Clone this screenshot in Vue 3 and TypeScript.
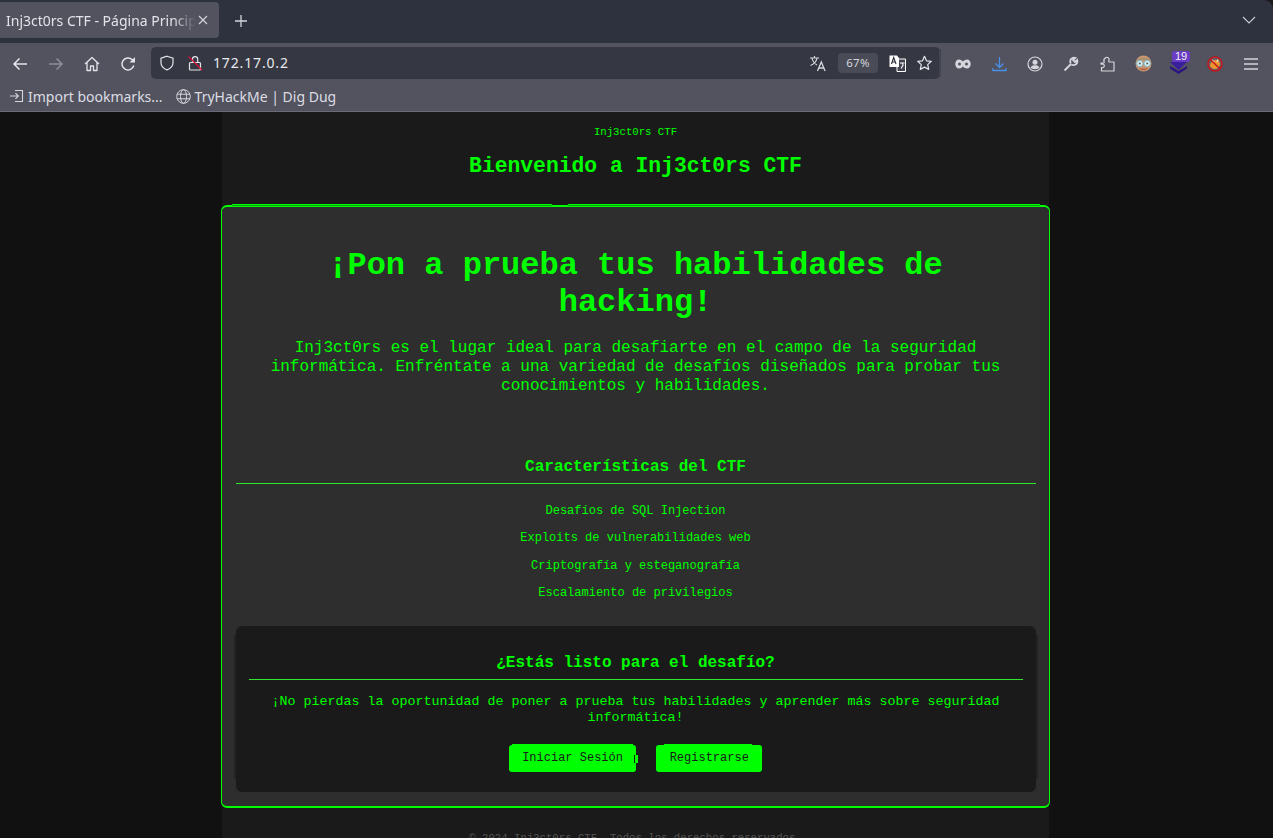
<script setup lang="ts">
const features: string[] = [
  'Desafíos de SQL Injection',
  'Exploits de vulnerabilidades web',
  'Criptografía y esteganografía',
  'Escalamiento de privilegios',
]
</script>

<template>
  <div class="window">
    <div class="tabstrip">
      <div class="tab">
        <span class="tab-title">Inj3ct0rs CTF - Página Principal</span>
        <svg class="tab-close" width="10" height="10" viewBox="0 0 10 10"><path d="M1 1l8 8M9 1l-8 8" stroke="#d5d6dc" stroke-width="1.1" fill="none" /></svg>
      </div>
      <svg class="new-tab" width="14" height="14" viewBox="0 0 14 14"><path d="M7 1v12M1 7h12" stroke="#d5d6dc" stroke-width="1.3" fill="none" /></svg>
      <svg class="tabs-menu" width="14" height="8" viewBox="0 0 14 8"><path d="M1 1l6 6 6-6" stroke="#c8c9d0" stroke-width="1.2" fill="none" /></svg>
    </div>

    <div class="toolbar">
      <button class="tool"><svg width="16" height="16" viewBox="0 0 16 16"><path d="M15 8H2M7.5 2.5L2 8l5.5 5.5" stroke="#e4e5ea" stroke-width="1.5" fill="none" /></svg></button>
      <button class="tool dim"><svg width="16" height="16" viewBox="0 0 16 16"><path d="M1 8h13M8.5 2.5L14 8l-5.5 5.5" stroke="#8d8e97" stroke-width="1.5" fill="none" /></svg></button>
      <button class="tool"><svg width="16" height="16" viewBox="0 0 16 16"><path d="M1 8l7-6.5L15 8M3 6.5V14.5h3.5V10h3v4.500H13V6.5" stroke="#e4e5ea" stroke-width="1.3" fill="none" stroke-linejoin="round" /></svg></button>
      <button class="tool"><svg width="16" height="16" viewBox="0 0 16 16"><path d="M13.8 9.5A6 6 0 1 1 12.3 3.800L14.500 6" stroke="#e4e5ea" stroke-width="1.4" fill="none" /><path d="M15 1v5.500H9.500z" fill="#e4e5ea" /></svg></button>

      <div class="urlbar">
        <svg class="ub-shield" width="16" height="16" viewBox="0 0 16 16"><path d="M8 1.200l6 2v4.500c0 3.500-2.500 5.800-6 7.200-3.500-1.400-6-3.700-6-7.200V3.200z" stroke="#e4e5ea" stroke-width="1.2" fill="none" /></svg>
        <svg class="ub-lock" width="15" height="16" viewBox="0 0 15 16"><rect x="1.500" y="7.500" width="11" height="7.500" rx="1" stroke="#e4e5ea" stroke-width="1.2" fill="none" /><path d="M4.500 7.500V4.200a2.600 2.600 0 0 1 5.200 0v3.300" stroke="#e4e5ea" stroke-width="1.2" fill="none" /><path d="M0.500 1.500l13.500 13.500" stroke="#e0103c" stroke-width="1.2" /></svg>
        <span class="url">172.17.0.2</span>
        <span class="ub-spacer"></span>
        <svg class="ub-translate" width="18" height="17" viewBox="0 0 18 17"><path d="M1 3h9M5.500 1v2M3 3c.6 3 2.800 5.800 5 7M8 3c-.5 3-3 6-6.500 7.500" stroke="#d5d6dc" stroke-width="1.2" fill="none" /><path d="M8.500 16l3.800-9 3.800 9M9.800 13h5" stroke="#d5d6dc" stroke-width="1.3" fill="none" /></svg>
        <span class="zoom-pill">67%</span>
        <svg class="ub-ext-translate" width="17" height="17" viewBox="0 0 17 17"><path d="M8 4h8.500v12.500H8z" fill="#41434e" stroke="#fff" stroke-width="1" /><path d="M0.500 0.500h7.500l2 2.500 0 9H0.500z" fill="#fff" /><path d="M2.500 9l2.200-6.500L7 9M3.300 7h2.800" stroke="#2b2d3a" stroke-width="1.1" fill="none" /><path d="M11 8h4.500M13.500 8v1.500M12 13.500l2.500-4" stroke="#fff" stroke-width="1.1" fill="none" /></svg>
        <svg class="ub-star" width="17" height="16" viewBox="0 0 16 16"><path d="M8 1.300l2 4.500 4.800.5-3.600 3.300 1 4.800L8 12.100l-4.200 2.300 1-4.800L1.200 6.300 6 5.800z" stroke="#e4e5ea" stroke-width="1.2" fill="none" stroke-linejoin="round" /></svg>
      </div>

      <div class="actions">
        <button class="act"><svg width="16" height="10" viewBox="0 0 16 10"><path d="M4 .5C5.800.5 7 1.500 8 2.500 9 1.500 10.200.5 12 .5c2.200 0 3.700 2 3.700 4.500S14.200 9.500 12 9.500c-1.800 0-3-1-4-2-1 1-2.200 2-4 2C1.800 9.500.3 7.500.3 5S1.800.5 4 .5z" fill="#d5d6dc" /><circle cx="4.500" cy="5" r="1.500" fill="#52535f" /><circle cx="11.500" cy="5" r="1.500" fill="#52535f" /></svg></button>
        <button class="act"><svg width="15" height="16" viewBox="0 0 15 16"><path d="M7.500 1v10M3.500 7.500l4 4 4-4" stroke="#4a90e8" stroke-width="1.3" fill="none" /><path d="M1 12v2.500h13V12" stroke="#4a90e8" stroke-width="1.3" fill="none" /></svg></button>
        <button class="act"><svg width="16" height="16" viewBox="0 0 16 16"><circle cx="8" cy="8" r="7" stroke="#d5d6dc" stroke-width="1.2" fill="none" /><circle cx="8" cy="6.300" r="2.500" fill="#d5d6dc" /><path d="M3.500 11.500c1-1.700 2.500-2.300 4.500-2.300s3.500.6 4.500 2.300c-1 1.200-2.500 1.700-4.500 1.700s-3.500-.5-4.500-1.700z" fill="#d5d6dc" /></svg></button>
        <button class="act"><svg width="16" height="16" viewBox="0 0 16 16"><path d="M1.500 14.500L8 8M8.500 8.500c2 1 4.500.5 5.500-1.500.5-1 .5-2 .2-3L12 6 10 4l2.300-2.200C11 1.400 10 1.500 9 2.200 7.200 3.300 7 5.700 7.800 7.500" stroke="#d5d6dc" stroke-width="1.800" fill="none" /></svg></button>
        <button class="act"><svg width="15" height="16" viewBox="0 0 15 16"><path d="M1 7h2.500c.8 0 1-1 .5-1.700C3.500 4 4.300 2.500 6 1.500 7 1 8.500 1.500 9 2.800c.3 1-.3 1.700-.3 2.400 0 .5.300.8.800.8H14v9H1.500v-3.500c1.500.3 2.800-.2 2.800-1.800S3 7.800 1 8.200z" stroke="#d5d6dc" stroke-width="1.2" fill="none" stroke-linejoin="round" /></svg></button>
        <button class="act"><svg width="17" height="17" viewBox="0 0 17 17"><circle cx="8.500" cy="8.500" r="8" fill="#c9956e" /><path d="M1 7C2 1.500 15 1.500 16 7c-2-1.500-4-2-7.500-2S3 5.500 1 7z" fill="#a5916f" /><path d="M4 13c2 3 7 3 9 0-2 1-7 1-9 0z" fill="#b0573f" /><circle cx="4.800" cy="8.500" r="3.200" fill="#d9eef0" stroke="#7fb3bb" /><circle cx="12.200" cy="8.500" r="3.200" fill="#d9eef0" stroke="#7fb3bb" /><circle cx="4.800" cy="8.500" r="1" fill="#4b5a60" /><circle cx="12.200" cy="8.500" r="1" fill="#4b5a60" /></svg></button>
        <button class="act badge-host">
          <svg class="stack" width="17" height="13" viewBox="0 0 17 13"><path d="M0 5l8.500 5L17 5v2.500L8.500 13 0 7.500z" fill="#2c1480" /><path d="M0 1h17L8.500 9z" fill="#3a1f9c" /></svg>
          <span class="badge">19</span>
        </button>
        <button class="act"><svg width="16" height="16" viewBox="0 0 16 16"><circle cx="8" cy="8" r="6.500" fill="#6a6068" /><path d="M3 10c0-3 3-6 6-6 1 0 3 1 4 3 0 3-2 6-5 6-2 0-4-1-5-3z" fill="#ef9630" /><path d="M5 4l2 2M11 3.500L10 6" stroke="#f3e2c6" stroke-width="1.4" /><circle cx="8" cy="8" r="7" stroke="#c4161c" stroke-width="1.5" fill="none" /><path d="M3 3l10 10" stroke="#c4161c" stroke-width="1.5" /></svg></button>
        <button class="act"><svg width="14" height="12" viewBox="0 0 14 12"><path d="M0 1h14M0 6h14M0 11h14" stroke="#d5d6dc" stroke-width="1.3" /></svg></button>
      </div>
    </div>

    <div class="bookmarks">
      <span class="bm">
        <svg width="15" height="14" viewBox="0 0 15 14"><path d="M6 1.500h7.500v11H6M1 7h8M6.500 4.200L9.300 7l-2.800 2.800" stroke="#d5d6dc" stroke-width="1.1" fill="none" /></svg>
        Import bookmarks...
      </span>
      <span class="bm">
        <svg width="15" height="15" viewBox="0 0 15 15"><circle cx="7.500" cy="7.500" r="6.800" stroke="#d5d6dc" stroke-width="1" fill="none" /><ellipse cx="7.500" cy="7.500" rx="3" ry="6.800" stroke="#d5d6dc" stroke-width="1" fill="none" /><path d="M1 5.200h13M1 9.800h13" stroke="#d5d6dc" stroke-width="1" fill="none" /></svg>
        TryHackMe | Dig Dug
      </span>
    </div>

    <div class="page">
      <div class="container">
        <header class="site-header">
          <p class="brand">Inj3ct0rs CTF</p>
          <h1 class="welcome">Bienvenido a Inj3ct0rs CTF</h1>
          <div class="rule"><span class="rule-a"></span><span class="rule-b"></span></div>
        </header>

        <main class="main">
          <section class="hero">
            <h2>¡Pon a prueba tus habilidades de hacking!</h2>
            <p>Inj3ct0rs es el lugar ideal para desafiarte en el campo de la seguridad informática. Enfréntate a una variedad de desafíos diseñados para probar tus conocimientos y habilidades.</p>
          </section>

          <section class="features">
            <h3>Características del CTF</h3>
            <ul>
              <li v-for="f in features" :key="f">{{ f }}</li>
            </ul>
          </section>

          <section class="cta">
            <h3>¿Estás listo para el desafío?</h3>
            <p>¡No pierdas la oportunidad de poner a prueba tus habilidades y aprender más sobre seguridad informática!</p>
            <div class="cta-btns">
              <a class="btn btn-login">Iniciar Sesión</a>
              <a class="btn btn-register">Registrarse</a>
            </div>
          </section>
        </main>

        <footer class="site-footer">© 2024 Inj3ct0rs CTF. Todos los derechos reservados.</footer>
      </div>
    </div>
  </div>
</template>

<style>
html, body { margin: 0; height: 100%; overflow: hidden; background: #1a1a1a; }
</style>

<style scoped>
.window {
  width: 1273px;
  height: 838px;
  overflow: hidden;
  display: flex;
  flex-direction: column;
  font-family: "Noto Sans", sans-serif;
  color: #e4e5ea;
}
.tabstrip {
  height: 43px;
  flex: none;
  box-sizing: border-box;
  background: #2e313e;
  border-top-right-radius: 9px;
  display: flex;
  align-items: flex-start;
  padding-top: 2px;
}
.tab {
  width: 219px;
  height: 36px;
  box-sizing: border-box;
  background: #52535f;
  border-radius: 0 4px 4px 0;
  display: flex;
  align-items: center;
  padding-left: 6px;
  position: relative;
  overflow: hidden;
}
.tab-title {
  font-size: 14px;
  white-space: nowrap;
  color: #e2e3e8;
  width: 190px;
  overflow: hidden;
  -webkit-mask-image: linear-gradient(to right, #000 88%, transparent);
  mask-image: linear-gradient(to right, #000 88%, transparent);
}
.tab-close { position: absolute; left: 198px; top: 13px; }
.new-tab { margin: 12px 0 0 15px; }
.tabs-menu { margin: 14px 17px 0 auto; }
.toolbar {
  height: 41px;
  flex: none;
  background: #52535f;
  display: flex;
  align-items: center;
  padding-left: 2px;
  box-sizing: border-box;
}
.tool {
  width: 36px;
  height: 36px;
  border: 0;
  padding: 0;
  background: none;
  display: flex;
  align-items: center;
  justify-content: center;
}
.urlbar {
  margin-left: 5px;
  width: 789px;
  height: 32px;
  margin-top: -1px;
  background: #353742;
  border-radius: 5px;
  display: flex;
  align-items: center;
  box-sizing: border-box;
  position: relative;
}
.urlbar::after {
  content: "";
  position: absolute;
  right: -1px;
  top: 2px;
  bottom: 2px;
  width: 2px;
  background: #42444f;
}
.ub-shield { margin-left: 8px; }
.ub-lock { margin-left: 13px; }
.url {
  margin: -1px 0 0 10px;
  font-size: 14px;
  letter-spacing: 0.85px;
  color: #e8e9ee;
}
.ub-spacer { flex: 1; }
.ub-translate { margin-right: 1px; }
.zoom-pill {
  margin-left: 10px;
  width: 40px;
  height: 20px;
  line-height: 20px;
  text-align: center;
  font-size: 11.5px;
  letter-spacing: 0.3px;
  background: #494b56;
  color: #d5d6dc;
  border-radius: 4px;
}
.ub-ext-translate { margin-left: 11px; }
.ub-star { margin-left: 10px; margin-right: 7px; }
.actions {
  margin-left: 5px;
  display: flex;
  align-items: center;
}
.act {
  width: 36px;
  height: 36px;
  border: 0;
  padding: 0;
  background: none;
  display: flex;
  align-items: center;
  justify-content: center;
  position: relative;
}
.stack { margin: 8px 2px 0 0; }
.badge {
  position: absolute;
  top: 5px;
  left: 11px;
  height: 11px;
  width: 18px;
  line-height: 11px;
  text-align: center;
  font-size: 11px;
  background: #6a3cc4;
  color: #f2f0fa;
  border-radius: 2px;
}
.bookmarks {
  height: 28px;
  flex: none;
  box-sizing: border-box;
  background: #52535f;
  border-bottom: 1px solid #6a6b76;
  display: flex;
  align-items: center;
  padding: 0 0 3px 9px;
  gap: 13px;
  font-size: 14px;
  color: #dcdde3;
}
.bm { display: inline-flex; align-items: center; gap: 4px; white-space: nowrap; }

.page {
  flex: 1;
  min-height: 0;
  background: #111111;
  padding-left: 222px;
  font-family: "Liberation Mono", monospace;
  color: #00ff00;
}
.container {
  width: 827px;
  background: #1a1a1a;
  min-height: 100%;
}
.site-header {
  text-align: center;
  padding-top: 14px;
}
.brand {
  margin: 0;
  font-size: 10.67px;
  line-height: 12px;
}
.welcome {
  margin: 16px 0 0;
  font-size: 21.33px;
  line-height: 25px;
  font-weight: 700;
}
.rule {
  position: relative;
  z-index: 1;
  display: flex;
  margin: 25px 0 -1px 10px;
  height: 2px;
  gap: 16px;
}
.rule-a,
.rule-b { background: linear-gradient(#00ff00 50%, #0c9c0c 50%); }
.rule-a { width: 320px; }
.rule-b { width: 472px; }
.main {
  margin: 0 -1px;
  box-sizing: border-box;
  height: 603px;
  border: 1px solid #00ff00;
  border-width: 2px 1px;
  border-radius: 6px;
  background: #2e2e2e;
  padding: 0 13px 0 14px;
  text-align: center;
}
.hero { padding: 40px 33px 0 32px; }
.hero h2 {
  margin: 0;
  font-size: 32px;
  line-height: 37px;
  font-weight: 700;
}
.hero p {
  margin: 18px 0 0;
  font-size: 16px;
  line-height: 19px;
}
.features { margin-top: 62px; }
.features h3 {
  margin: 0;
  font-size: 16px;
  line-height: 18px;
  padding-bottom: 7px;
  border-bottom: 1px solid #2ee62e;
  text-indent: -1px;
}
.features ul {
  list-style: none;
  margin: 0;
  padding: 20px 1px 0 0;
}
.features li {
  font-size: 12px;
  line-height: 14px;
  margin-bottom: 13.3px;
}
.cta {
  position: relative;
  margin-top: 26px;
  height: 166px;
  box-sizing: border-box;
  background: #1a1a1a;
  border-radius: 6px;
  padding: 28px 13.33px 0;
}
.cta::before,
.cta::after {
  content: "";
  position: absolute;
  top: 9px;
  bottom: 13px;
  width: 2px;
  background: #232323;
}
.cta::before { left: -2px; }
.cta::after { right: -2px; }
.cta h3 {
  margin: 0;
  font-size: 16px;
  line-height: 18px;
  padding-bottom: 7px;
  border-bottom: 1px solid #2ee62e;
  text-indent: -1px;
}
.cta p {
  margin: 14px 0 0;
  padding-right: 1px;
  font-size: 13.33px;
  line-height: 16px;
}
.cta-btns {
  display: flex;
  justify-content: center;
  gap: 20px;
  margin-top: 19px;
  padding-right: 1px;
}
.btn {
  position: relative;
  height: 27px;
  line-height: 27px;
  padding: 0 13.33px;
  background: #00ff00;
  color: #1a1a1a;
  font-size: 12px;
  border-radius: 3px;
  white-space: nowrap;
}
.btn::before {
  content: "";
  position: absolute;
  top: -1px;
  height: 1px;
  background: #00ff00;
}
.btn-login::before { left: 3px; right: 3px; }
.btn-register::before { left: 8px; right: 10px; }
.btn-login::after {
  content: "";
  position: absolute;
  left: 125px;
  top: 10px;
  width: 1px;
  height: 8px;
  border-right: 3px solid #00ff00;
  background: #1a1a1a;
}
.site-footer {
  margin-top: 24px;
  text-align: center;
  font-size: 10.67px;
  line-height: 12px;
  color: #555555;
}
</style>
